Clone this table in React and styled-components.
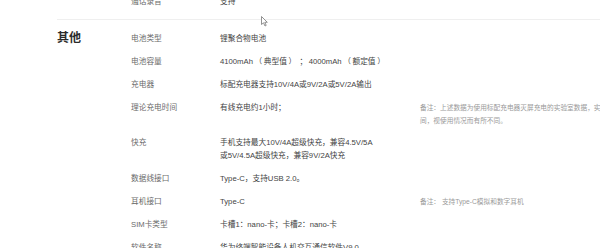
import React from "react";
import styled, { createGlobalStyle } from "styled-components";

const Global = createGlobalStyle`
  html, body { margin: 0; padding: 0; background: #fff; }
  body {
    width: 600px; height: 248px; overflow: hidden;
    font-family: "Liberation Sans", "Noto Sans CJK SC", sans-serif;
    text-spacing-trim: space-all;
  }
  #root { width: 600px; height: 248px; overflow: hidden; position: relative; }
`;

const Page = styled.div`
  padding-left: 57px;
  margin-top: -10.4px;
  width: 543px;
`;

const Section = styled.section`
  display: grid;
  grid-template-columns: 74px 1fr;
  padding: ${(p) => (p.$first ? "0 0 7px" : "7px 0 0")};
  border-top: ${(p) => (p.$first ? "none" : "1px solid #efefef")};
`;

const Heading = styled.h3`
  margin: 0;
  padding-top: 4.9px;
  font-size: 12px;
  line-height: 13px;
  font-weight: 700;
  color: #2b2b2b;
`;

const Rows = styled.div`
  display: flex;
  flex-direction: column;
`;

const Row = styled.div`
  display: grid;
  grid-template-columns: 89px 200px 1fr;
  padding: 4.9px 0;
  font-size: 7.7px;
  line-height: 13px;
`;

const Label = styled.div`
  color: #6a6a6a;
  white-space: nowrap;
`;

const Value = styled.div`
  color: #444;
  white-space: nowrap;
`;

const Punct = styled.span`
  margin: 0 1.6px;
`;

const Note = styled.div`
  color: #9a9a9a;
  font-size: 6.7px;
  line-height: 13px;
  white-space: nowrap;
`;

const Cursor = styled.svg`
  position: absolute;
  left: 261px;
  top: 16px;
  width: 7px;
  height: 11px;
`;

const Capacity = () => (
  <>
    4100mAh<Punct>（</Punct>典型值<Punct>）</Punct>
    <Punct>；</Punct>4000mAh<Punct>（</Punct>额定值<Punct>）</Punct>
  </>
);

const specs = [
  { label: "电池类型", value: ["锂聚合物电池"] },
  { label: "电池容量", value: [<Capacity key="c" />] },
  { label: "充电器", value: ["标配充电器支持10V/4A或9V/2A或5V/2A输出"] },
  {
    label: "理论充电时间",
    value: ["有线充电约1小时；"],
    note: ["备注：上述数据为使用标配充电器灭屏充电的实验室数据，实际充电时", "间，视使用情况而有所不同。"],
  },
  {
    label: "快充",
    value: ["手机支持最大10V/4A超级快充，兼容4.5V/5A", "或5V/4.5A超级快充，兼容9V/2A快充"],
  },
  { label: "数据线接口", value: ["Type-C，支持USB 2.0。"] },
  { label: "耳机接口", value: ["Type-C"], note: ["备注： 支持Type-C模拟和数字耳机"] },
  { label: "SIM卡类型", value: ["卡槽1：nano-卡；卡槽2：nano-卡"] },
  { label: "软件名称", value: ["华为终端智能设备人机交互通信软件V9.0"] },
];

const Lines = ({ lines }) =>
  lines.map((l, i) => (
    <React.Fragment key={i}>
      {l}
      {i < lines.length - 1 && <br />}
    </React.Fragment>
  ));

export default function App() {
  return (
    <>
      <Global />
      <Page>
        <Section $first>
          <div />
          <Rows>
            <Row>
              <Label>通话录音</Label>
              <Value>支持</Value>
            </Row>
          </Rows>
        </Section>
        <Section>
          <Heading>其他</Heading>
          <Rows>
            {specs.map((s) => (
              <Row key={s.label}>
                <Label>{s.label}</Label>
                <Value>
                  <Lines lines={s.value} />
                </Value>
                {s.note && (
                  <Note>
                    <Lines lines={s.note} />
                  </Note>
                )}
              </Row>
            ))}
          </Rows>
        </Section>
      </Page>
      <Cursor viewBox="0 0 7 11">
        <path
          d="M0.5 0.5 L0.5 8.5 L2.5 6.8 L4 10 L5.2 9.4 L3.8 6.3 L6.3 6.3 Z"
          fill="#fff"
          stroke="#777"
          strokeWidth="0.8"
          strokeLinejoin="round"
        />
      </Cursor>
    </>
  );
}
